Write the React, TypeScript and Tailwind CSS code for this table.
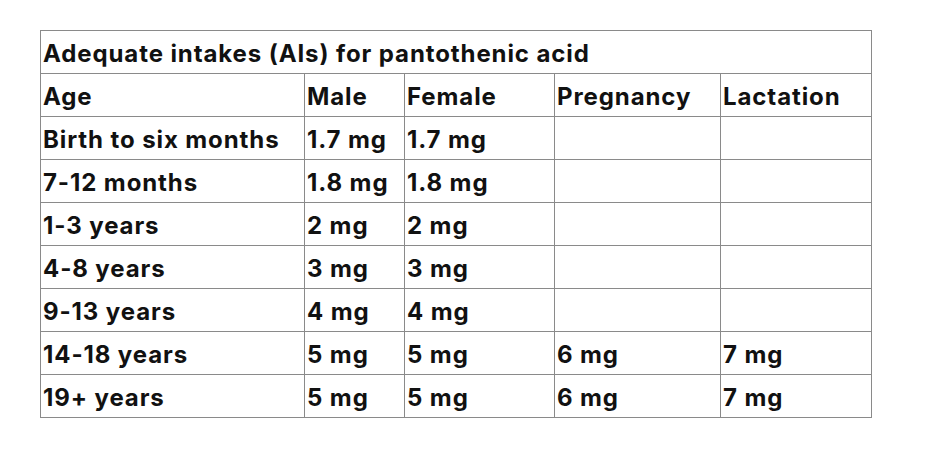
import React from 'react';

const rows: string[][] = [
  ['Birth to six months', '1.7 mg', '1.7 mg', '', ''],
  ['7-12 months', '1.8 mg', '1.8 mg', '', ''],
  ['1-3 years', '2 mg', '2 mg', '', ''],
  ['4-8 years', '3 mg', '3 mg', '', ''],
  ['9-13 years', '4 mg', '4 mg', '', ''],
  ['14-18 years', '5 mg', '5 mg', '6 mg', '7 mg'],
  ['19+ years', '5 mg', '5 mg', '6 mg', '7 mg'],
];

const headers = ['Age', 'Male', 'Female', 'Pregnancy', 'Lactation'];
const widths = ['w-[264px]', 'w-[100px]', 'w-[150px]', 'w-[166px]', 'w-[151px]'];

const cell = 'border border-[#8a8a8a] h-[43px] px-[2px] pt-[3px] text-left align-middle whitespace-nowrap';

const App: React.FC = () => {
  return (
    <div className="w-[925px] h-[453px] bg-white pt-[30px] pl-[40px] font-['Inter',sans-serif] font-bold text-[#111] text-[24px] tracking-[0.9px] leading-none">
      <table className="border-collapse table-fixed w-[832px]">
        <colgroup>
          {widths.map((w, i) => (
            <col key={i} className={w} />
          ))}
        </colgroup>
        <tbody>
          <tr>
            <td colSpan={5} className={cell}>
              Adequate intakes (AIs) for pantothenic acid
            </td>
          </tr>
          <tr>
            {headers.map((h) => (
              <td key={h} className={cell}>
                {h}
              </td>
            ))}
          </tr>
          {rows.map((r, i) => (
            <tr key={i}>
              {r.map((c, j) => (
                <td key={j} className={cell}>
                  {c}
                </td>
              ))}
            </tr>
          ))}
        </tbody>
      </table>
    </div>
  );
};

export default App;
